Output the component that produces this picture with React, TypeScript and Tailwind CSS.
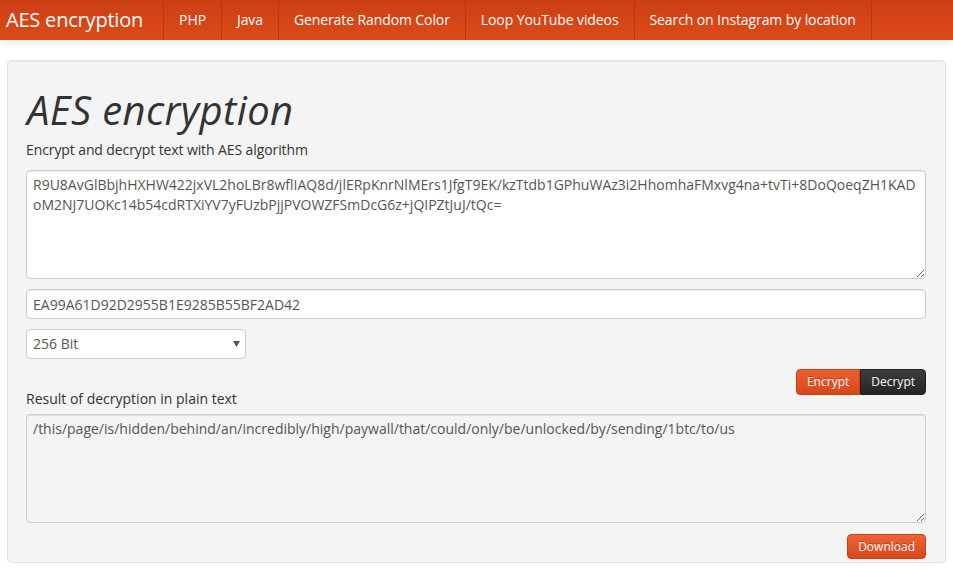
import React from "react";

const cipher =
  "R9U8AvGlBbjhHXHW422jxVL2hoLBr8wflIAQ8d/jlERpKnrNlMErs1JfgT9EK/kzTtdb1GPhuWAz3i2HhomhaFMxvg4na+tvTi+8DoQoeqZH1KAD\noM2NJ7UOKc14b54cdRTXiYV7yFUzbPjjPVOWZFSmDcG6z+jQIPZtJuJ/tQc=";

const plain =
  "/this/page/is/hidden/behind/an/incredibly/high/paywall/that/could/only/be/unlocked/by/sending/1btc/to/us";

export default function App() {
  const navItems = [
    "PHP",
    "Java",
    "Generate Random Color",
    "Loop YouTube videos",
    "Search on Instagram by location",
  ];
  return (
    <div className="min-h-screen bg-white font-['Open_Sans',sans-serif] text-[14px] leading-5 text-[#333]">
      <nav className="relative z-10 flex h-10 items-stretch bg-gradient-to-b from-[#cc3f16] to-[#dd4a17] shadow-[0_1px_8px_rgba(0,0,0,0.12)]">
        <a className="flex items-center pl-[6px] pr-[20px] text-[20px] tracking-[-0.2px] text-white">
          AES encryption
        </a>
        {navItems.map((t) => (
          <div key={t} className="flex">
            <div className="w-px bg-[#b93a12]" />
            <a className="flex items-center px-[15px] tracking-[-0.1px] text-white">{t}</a>
          </div>
        ))}
        <div className="w-px bg-[#b93a12]" />
      </nav>

      <div className="px-[7px] pt-5">
        <div className="rounded border border-[#e3e3e3] bg-[#f4f4f4] pb-[3px] pl-[18px] pr-[19px] pt-[19px] shadow-[inset_0_1px_1px_rgba(0,0,0,0.05)]">
          <h1 className="my-[10px] pl-px text-[40px] leading-10 italic tracking-[0.4px] text-[#333]">
            AES encryption
          </h1>
          <p className="mb-[10px] tracking-[-0.1px]">Encrypt and decrypt text with AES algorithm</p>

          <textarea
            readOnly
            value={cipher}
            className="mb-[10px] block h-[109px] w-full resize-y rounded border border-[#cccccc] bg-white px-[6px] py-[4px] text-[14px] leading-5 text-[#555] shadow-[inset_0_1px_1px_rgba(0,0,0,0.075)] outline-none"
          />

          <input
            readOnly
            value="EA99A61D92D2955B1E9285B55BF2AD42"
            className="mb-[10px] block h-[30px] w-full rounded border border-[#cccccc] bg-white px-[6px] py-[4px] text-[14px] leading-5 text-[#555] shadow-[inset_0_1px_1px_rgba(0,0,0,0.075)] outline-none"
          />

          <div className="relative mb-[10px] w-[220px]">
            <select
              defaultValue="256"
              className="block h-[30px] w-full appearance-none rounded border border-[#cccccc] bg-white px-[6px] text-[14px] text-[#555] outline-none"
            >
              <option value="128">128 Bit</option>
              <option value="192">192 Bit</option>
              <option value="256">256 Bit</option>
            </select>
            <svg
              className="pointer-events-none absolute right-[6px] top-[12px]"
              width="7"
              height="6"
              viewBox="0 0 7 6"
            >
              <path d="M0 0 H7 L3.5 6 Z" fill="#555" />
            </svg>
          </div>

          <div className="flex justify-end">
            <div className="flex">
              <button className="h-[26px] rounded-l-[4px] border border-[#c8410f] bg-gradient-to-b from-[#ea5f30] to-[#d9471a] px-[10px] text-[12px] text-white [text-shadow:0_-1px_0_rgba(0,0,0,0.25)]">
                Encrypt
              </button>
              <button className="h-[26px] rounded-r-[4px] border border-[#1f1f1f] bg-gradient-to-b from-[#3d3d3d] to-[#262626] px-[10px] text-[12px] text-white [text-shadow:0_-1px_0_rgba(0,0,0,0.25)]">
                Decrypt
              </button>
            </div>
          </div>

          <label className="-mt-[6px] mb-[5px] block">Result of decryption in plain text</label>

          <textarea
            readOnly
            value={plain}
            className="mb-[11px] block h-[109px] w-full resize-y rounded border border-[#cccccc] bg-[#f4f4f4] px-[6px] py-[4px] text-[14px] leading-5 text-[#555] shadow-[inset_0_1px_1px_rgba(0,0,0,0.075)] outline-none"
          />

          <div className="flex justify-end">
            <button className="h-[25px] rounded-[4px] border border-[#c8410f] bg-gradient-to-b from-[#ec6437] to-[#da4616] px-[10px] text-[12px] text-white [text-shadow:0_-1px_0_rgba(0,0,0,0.25)]">
              Download
            </button>
          </div>
        </div>
      </div>
    </div>
  );
}
